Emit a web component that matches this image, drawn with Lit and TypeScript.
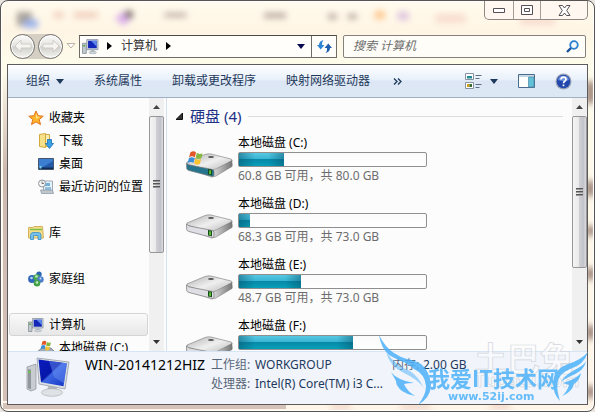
import { LitElement, html, css, svg } from "lit";
import { customElement } from "lit/decorators.js";

const pcIcon = (size: number) => html`<svg width=${size} height=${size} viewBox="0 0 16 16" aria-hidden="true">
  <path d="M.5 5h3.500v9.500h-3.500z" fill="#c4cbd0" stroke="#78848c" stroke-width=".7" />
  <path d="M1.300 6.500h1.500v1.500h-1.500z" fill="#3da12d" />
  <path d="M4.500 1.500h10.500v9.500h-10.500z" fill="#d6dce2" stroke="#8793a0" stroke-width=".8" />
  <path d="M5.700 2.700h8.200v7h-8.200z" fill="#1226b8" />
  <path d="M8.500 2.700h5.400v5.500z" fill="#5b86ea" />
  <path d="M8.500 11h3l.8 2.300h-4.600z" fill="#b5bdc5" />
  <ellipse cx="10" cy="13.700" rx="3.600" ry="1.100" fill="#d3d8dd" stroke="#98a1aa" stroke-width=".5" />
</svg>`;

const flag = svg`
  <path d="M4 3q4-3 7 0l-1.500 6q-3-2.500-7 0z" fill="#e2562a" />
  <path d="M12 3.500q3 2.500 7 .5l-1.500 6q-4 2-7-.5z" fill="#86b840" />
  <path d="M2.300 10q4-2.500 7 0l-1.500 6q-3-2.500-7 0z" fill="#3c8fd8" />
  <path d="M10.200 10.500q3 2.500 7 .5l-1.500 6q-4 2-7-.5z" fill="#f7c332" />`;

const driveIcon = (system: boolean) => html`<svg class="drive-icon" width="48" height="32" viewBox="0 0 48 32" aria-hidden="true">
  <defs>
    <linearGradient id="top" x1="0" y1="0" x2="1" y2="1"><stop offset="0" stop-color="#b0b0b0" /><stop offset=".5" stop-color="#efefef" /><stop offset="1" stop-color="#b5b5b5" /></linearGradient>
    <linearGradient id="side" x1="0" y1="0" x2="1" y2="0"><stop offset="0" stop-color="#d9d9d9" /><stop offset="1" stop-color="#777" /></linearGradient>
  </defs>
  <path d="M3 20l25 9 20-11v-3l-21 15z" fill="#000" opacity=".18" />
  <path d="M2 14L20 6.500q3-1 6-.5l20 5q1.500.5 1 2l-17 9.500q-2 .7-4 .3L3 16.500q-2-1-1-2.500z" fill="url(#top)" stroke="#8a8a8a" stroke-width=".7" />
  <path d="M47 12.500v6L31 28q-1.500.8-2.500.5v-7q1.500-.2 3-.8z" fill="url(#side)" stroke="#777" stroke-width=".5" />
  <path d="M1.500 15q1 1.500 3 2l23 4.500q1.500.3 1.500 2v3.500q0 2-2 1.500L4 22.500q-2-.5-2.300-2z" fill=${system ? "#23748c" : "#dedee4"} stroke="#777" stroke-width=".7" />
  <path d="M23 21l4 .8v5.500l-4-.9z" fill="#174b1c" />
  <path d="M24.300 22.300l1.500.3v3.600l-1.500-.3z" fill="#6fe03c" />
  <ellipse cx="26" cy="9" rx="3" ry="1" fill="#555" />
  ${system ? svg`<g transform="translate(2 2) scale(.82)">${flag}</g>` : ""}
</svg>`;

const icons: Record<string, unknown> = {
  star: html`<svg width="16" height="16" viewBox="0 0 16 16"><path d="M8 1l2.100 4.700 5.100.5-3.900 3.400 1.200 5-4.500-2.700-4.500 2.700 1.200-5L.8 6.200l5.100-.5z" fill="#ffb52b" stroke="#e2711d" /><path d="M8 3l1.200 3.600 2.800.4L8 9z" fill="#ffe48a" /></svg>`,
  download: html`<svg width="16" height="16" viewBox="0 0 16 16"><path d="M1.500 1.500l6-1v14l-6-1z" fill="#f7e08a" stroke="#d1a93c" /><path d="M7.500 1.500h4v12h-4z" fill="#fbeeb0" stroke="#d1a93c" /><path d="M9.500 6.500h4v4h2l-4 5-4-5h2z" fill="#38a0e6" stroke="#1a6cb5" stroke-width=".8" /></svg>`,
  desktop: html`<svg width="16" height="16" viewBox="0 0 16 16"><path d="M.5 2.500h15v11h-15z" fill="#235aa8" stroke="#44566e" /><path d="M1 3h14v2L5 11H1z" fill="#3c7fd0" /><path d="M1 11.500h14v1.500H1z" fill="#112c55" /><path d="M1.500 10h2v2.500h-2z" fill="#7fd0f2" /></svg>`,
  recent: html`<svg width="16" height="16" viewBox="0 0 16 16"><path d="M5.500 2h9v10h-9z" fill="#e6f1f8" stroke="#8a97a2" stroke-width=".8" /><path d="M7 4h5v3H7z" fill="#6db2dc" /><path d="M7 9h6M7 11h6" stroke="#3c8cc0" /><path d="M2.500 11h12l1 3.500H3.500z" fill="#bfc6cc" stroke="#8a97a2" stroke-width=".7" /><circle cx="4" cy="4.500" r="3.500" fill="#f5f5f5" stroke="#8d979e" /><path d="M4 2.500v2h2" stroke="#555" fill="none" stroke-width=".8" /></svg>`,
  library: html`<svg width="16" height="16" viewBox="0 0 16 16"><path d="M.5 13V2.500H5L6 1.500h8.500L15.500 13z" fill="#f4dc88" stroke="#c9a344" stroke-width=".8" /><path d="M2 4.500h12" stroke="#7fbf4c" stroke-width="1.500" /><path d="M2.500 14.500v-4q0-3 2.500-3h5.500q2.500 0 2.500 3v4h-3v-4h-4.500v4z" fill="#74c3ee" stroke="#388cc2" stroke-width=".8" /></svg>`,
  group: html`<svg width="16" height="16" viewBox="0 0 16 16"><circle cx="11" cy="3.200" r="2.700" fill="#2b66b5" /><circle cx="4" cy="8" r="3.900" fill="#2f66bb" /><circle cx="8.700" cy="6.500" r="3.300" fill="#48a850" /><circle cx="12.500" cy="8.500" r="3.200" fill="#4b7dca" /><circle cx="9" cy="12.300" r="3.300" fill="#45a04b" /><circle cx="3.500" cy="7" r="1.300" fill="#b5d3f5" /><circle cx="8.500" cy="5.500" r="1.200" fill="#c4f0c0" /><circle cx="9" cy="11.500" r="1.200" fill="#c4f0c0" /><circle cx="12.500" cy="7.500" r="1" fill="#d0e2fa" /></svg>`,
  pc: pcIcon(16),
  drive: html`<svg width="16" height="16" viewBox="0 0 16 16"><path d="M0 11l4-3h9l3 3v4H0z" fill="#a5adb2" stroke="#6d777c" stroke-width=".7" /><path d="M1 11.500h14v2.500H1z" fill="#28788c" /><g transform="translate(2 0) scale(.58)">${flag}</g></svg>`,
};

const sidebar = [
  { label: "收藏夹", icon: "star" },
  { label: "下载", icon: "download", child: true },
  { label: "桌面", icon: "desktop", child: true },
  { label: "最近访问的位置", icon: "recent", child: true },
  null,
  { label: "库", icon: "library" },
  null,
  { label: "家庭组", icon: "group" },
  null,
  { label: "计算机", icon: "pc", selected: true },
  { label: "本地磁盘 (C:)", icon: "drive", child: true },
];

const drives = [
  { name: "本地磁盘 (C:)", info: "60.8 GB 可用，共 80.0 GB", used: 24, system: true },
  { name: "本地磁盘 (D:)", info: "68.3 GB 可用，共 73.0 GB", used: 6, system: false },
  { name: "本地磁盘 (E:)", info: "48.7 GB 可用，共 73.0 GB", used: 33, system: false },
  { name: "本地磁盘 (F:)", info: "", used: 61, system: false },
];

@customElement("explorer-scrollbar")
class ExplorerScrollbar extends LitElement {
  static styles = css`
    :host { display: flex; flex-direction: column; width: 15px; flex: none; background: #f0f0f0; }
    .arrow { height: 18px; flex: none; border: 0; padding: 0; background: none; display: grid; place-items: center; }
    .track { flex: 1; min-height: 0; }
    .thumb { box-sizing: border-box; width: 15px; height: var(--thumb, 50%); border: 1px solid #979797; border-radius: 2px;
      background: linear-gradient(90deg, #f5f5f5, #e9e9eb 45%, #cfcfd4 50%, #c3c4cb 80%, #dcdce0); display: grid; place-items: center; }
    .grip { width: 7px; height: 8px; background: repeating-linear-gradient(#555 0 1px, #999 1px 2px, transparent 2px 3px); }
  `;
  render() {
    return html`
      <button class="arrow" aria-label="向上滚动"><svg width="7" height="4"><path d="M0 4L3.500 0 7 4z" fill="#444" /></svg></button>
      <div class="track"><div class="thumb"><div class="grip"></div></div></div>
      <button class="arrow" aria-label="向下滚动"><svg width="7" height="4"><path d="M0 0h7L3.500 4z" fill="#333" /></svg></button>`;
  }
}

@customElement("app-root")
class AppRoot extends LitElement {
  static styles = css`
    :host { display: block; height: 100vh; background: #e8e4df; font: 12px/18px "Noto Sans", "Noto Sans CJK SC", sans-serif; color: #000; }
    * { box-sizing: border-box; }
    button { border: 0; padding: 0; margin: 0; background: none; font: inherit; color: inherit; }
    a { color: inherit; text-decoration: none; }
    svg { display: block; flex: none; }
    .window { position: relative; height: 100%; display: flex; flex-direction: column; overflow: hidden; padding: 0 6px 6px;
      border: 1px solid #575350; border-radius: 8px; box-shadow: inset 0 0 0 1px #fff;
      background: linear-gradient(#fffbee, #fff5e4 30px, #fdfbea 60px, #fff5e8); }
    .glass { position: absolute; inset: 1px; width: calc(100% - 2px); height: calc(100% - 2px); }
    .title { position: relative; height: 19px; flex: none; display: flex; justify-content: flex-end; }
    .controls { display: flex; height: 19px; border: 1px solid #8e8985; border-top: 0; border-radius: 0 0 5px 5px; background: #fff7f0; }
    .controls button { width: 28px; display: grid; place-items: center; }
    .controls button + button { border-left: 1px solid #a39d99; width: 27px; }
    .controls button.close { width: 47px; }
    .nav { position: relative; height: 44px; flex: none; display: flex; align-items: center; padding: 10px 2px 2px 0; }
    .travel { display: flex; align-items: center; gap: 3px; background: #d6cfc4; border-radius: 14px; margin: 0 3px; }
    .travel button { width: 25px; height: 25px; border-radius: 50%; border: 1px solid #77736e; display: grid; place-items: center;
      background: linear-gradient(#fbfbfa, #e4e3df 48%, #cfcfcb 52%, #f4f4f0); box-shadow: inset 0 0 0 1px #fff; }
    .address { flex: 1; display: flex; align-items: center; height: 23px; margin-left: 3px; border: 1px solid #6f6b67; border-top-color: #4c4a48; background: #fffefb; }
    .address .crumb { margin: 0 9px; color: #333; }
    .address .refresh { width: 25px; height: 21px; border-left: 1px solid #6f6b67; display: grid; place-items: center; }
    .address .spacer { flex: 1; }
    .address .history { margin-right: 6px; padding: 6px 0; }
    .address > svg:first-child { margin: 0 8px 0 2px; }
    .search { display: flex; align-items: center; flex: 0 1 243px; min-width: 90px; height: 23px; margin-left: 6px; padding: 0 6px 0 9px; border: 1px solid #85807c; border-radius: 2px; background: #fffdf8; }
    .search input { flex: 1; min-width: 0; border: 0; outline: 0; padding: 0; background: none; font: inherit; font-style: italic; }
    .search input::placeholder { color: #6d6d6d; opacity: 1; }
    .body { position: relative; flex: 1; min-height: 0; display: flex; flex-direction: column; border: 1px solid #5c5a5a; margin: 0; background: #fcfcfc; }
    .toolbar { height: 33px; flex: none; display: flex; align-items: center; gap: 30px; padding: 0 15px 0 18px; color: #1e395b; white-space: nowrap;
      border-bottom: 1px solid #a0afc3; background: linear-gradient(#fdfeff, #e9f1fa 45%, #dce6f4 50%, #dde8f5); }
    .toolbar .menu { display: flex; align-items: center; gap: 6px; }
    .toolbar .more { margin-left: -7px; }
    .tools { flex: 1; display: flex; align-items: center; justify-content: flex-end; gap: 20px; }
    .toolbar .tools .menu { gap: 8px; }
    .panes { flex: 1; min-height: 0; display: flex; }
    .side { width: 141px; flex: none; overflow: hidden; padding: 8px 0 0 1px; }
    .row { height: 23px; display: flex; align-items: center; gap: 5px; padding-left: 18px; margin-right: 1px; white-space: nowrap; border: 1px solid transparent; border-radius: 3px; }
    .child { padding-left: 28px; }
    .selected { border-color: #d5d5d5; background: linear-gradient(#fafafa, #e7e7e7); }
    .splitter { width: 3px; flex: none; border-right: 1px solid #d3e0ef; margin-right: 8px; }
    .side-bar { --thumb: 63%; }
    .main-bar { --thumb: 70%; }
    .main { flex: 1; min-width: 0; overflow: hidden; padding-right: 9px; }
    .heading { height: 36px; display: flex; align-items: center; gap: 7px; color: #1e3287; margin: 0; padding-left: 1px; font-size: 15px; font-weight: 400; line-height: 20px; }
    .heading::after { content: ""; flex: 1; height: 1px; background: #dcdcdc; }
    .drive { height: 61px; display: grid; grid-template-columns: 48px minmax(60px, 189px); column-gap: 5px; padding-left: 10px; align-content: start; color: inherit; }
    .drive-icon { grid-row: 1 / 4; margin-top: 14px; }
    .name { height: 18px; white-space: nowrap; }
    .bar { height: 15px; border: 1px solid #8f8f8f; border-radius: 2px; background: linear-gradient(#fafafa, #fff); }
    .fill { height: 100%; background: linear-gradient(90deg, #07567080, transparent 16px calc(100% - 16px), #07567080), linear-gradient(#58c8e2, #38b5d4 45%, #0789a8 50%, #08a0b8); }
    .info { color: #6d6d6d; white-space: nowrap; }
    .details { height: 53px; flex: none; display: flex; padding: 4px 0 0 18px; background: #f1f5fb; border-top: 1px solid #d6e5f5; white-space: nowrap; }
    .facts { display: grid; grid-template-columns: 121px 39px 132px 26px auto; grid-auto-rows: 19px; column-gap: 5px; margin: 0 0 0 15px; color: #1e395b; align-content: start; }
    .facts dt { color: #5a6779; }
    .facts dd { margin: 0; }
    .facts .host { font-size: 14px; color: #000; grid-row: 1 / 3; }
    .mark { position: absolute; right: 0; bottom: 0; pointer-events: none; }
  `;

  private row(item: (typeof sidebar)[number]) {
    if (!item) return html`<div class="row"></div>`;
    return html`<a href="#" class="row ${item.child ? "child" : ""} ${item.selected ? "selected" : ""}">${icons[item.icon]}<span>${item.label}</span></a>`;
  }

  render() {
    return html`<div class="window">
      <svg class="glass" viewBox="0 0 593 410" preserveAspectRatio="none" aria-hidden="true">
        <defs><filter id="soft" x="-50%" y="-50%" width="200%" height="200%"><feGaussianBlur stdDeviation="3" /></filter>
        <linearGradient id="edge" x1="0" y1="0" x2="0" y2="1"><stop offset="0" stop-color="#cbb6ac" stop-opacity="0" /><stop offset=".3" stop-color="#cdb9b0" /><stop offset="1" stop-color="#d3c1b9" /></linearGradient></defs>
        <path d="M1 70h6v331H1z" fill="url(#edge)" />
        <path d="M1 403h284v6H1z" fill="#d5c3ba" />
        <g filter="url(#soft)">
          <path d="M15 10h15v14h-15z" fill="#a7a199" /><path d="M22 18h14v8h-14z" fill="#9ab2ed" />
          <path d="M52 10h10v6h-10zM72 10h24v6h-24z" fill="#f1cdbb" />
          <path d="M113 16l8-6 9 6-8 8z" fill="#dcb0ec" /><path d="M122 10l8-2 2 6-6 4z" fill="#776c64" />
          <path d="M163 11h22v4h-22zM263 11h22v5h-22zM327 12h9v5h-9zM347 12h9v5h-9z" fill="#b5a49b" />
          <path d="M374 9h10v8h-10z" fill="#ffc68c" /><path d="M397 10h11v8h-11z" fill="#ddc3df" />
          <path d="M435 12h30v9h-30zM520 15h35v8h-35z" fill="#f8ddcf" />
          <path d="M587 80h7v22h-7zM587 180h7v15h-7zM587 225h7v10h-7zM587 267h7v12h-7zM587 325h7v14h-7zM587 386h7v12h-7z" fill="#8d7065" />
          <path d="M330 404h20v5h-20zM400 404h30v5h-30zM490 404h20v5h-20z" fill="#eed1c2" />
        </g>
      </svg>
      <div class="title"><div class="controls">
        <button aria-label="最小化"><svg width="12" height="5"><path d="M.5.5h11v4H.5z" fill="#fff" stroke="#554f56" /></svg></button>
        <button aria-label="最大化"><svg width="12" height="10"><path d="M.5.5h11v9H.5zM3.500 3.500h5v3h-5z" fill="#fff" stroke="#554f56" /></svg></button>
        <button class="close" aria-label="关闭"><svg width="13" height="11" viewBox="0 0 13 11"><path d="M1 .5h3.500l2 2.500 2-2.500H12L8.700 5.500 12 10.500H8.500L6.500 8l-2 2.500H1l3.300-5z" fill="#fff" stroke="#554f56" /></svg></button>
      </div></div>
      <div class="nav">
        <div class="travel">
          <button aria-label="后退"><svg width="18" height="14" viewBox="0 0 18 14"><path d="M1 7l6-6v4h10v4H7v4z" fill="#f6f5f1" stroke="#cfccc5" /></svg></button>
          <button aria-label="前进"><svg width="18" height="14" viewBox="0 0 18 14"><path d="M17 7l-6-6v4H1v4h10v4z" fill="#f6f5f1" stroke="#cfccc5" /></svg></button>
        </div>
        <button aria-label="最近的页面"><svg width="10" height="6" viewBox="0 0 10 6"><path d="M1 .5h8l-4 4.500z" fill="#fff" stroke="#bdb2a4" /></svg></button>
        <div class="address">
          ${pcIcon(17)}
          <svg width="5" height="8"><path d="M0 0v8l5-4z" fill="#000" /></svg>
          <a href="#" class="crumb">计算机</a>
          <svg width="5" height="8"><path d="M0 0v8l5-4z" fill="#000" /></svg>
          <span class="spacer"></span>
          <button class="history" aria-label="以前的位置"><svg width="8" height="5"><path d="M0 0h8l-4 5z" fill="#0a0a50" /></svg></button>
          <button class="refresh" aria-label="刷新"><svg width="15" height="13" viewBox="0 0 15 13"><path d="M6.500 0q-2 2-1.500 5h2.500L3.700 9.500 0 5h2Q2 1 6.500 0z" fill="#2d86d3" /><path d="M8.500 13q2-2 1.500-5H7.500l3.800-4.500L15 8h-2q0 4-4.500 5z" fill="#1e5faf" /></svg></button>
        </div>
        <label class="search"><input type="text" placeholder="搜索 计算机" aria-label="搜索 计算机" />
          <svg width="13" height="13" viewBox="0 0 13 13"><path d="M1 12l4.500-4.500" stroke="#1c4f9c" stroke-width="2.400" /><circle cx="8" cy="5" r="3.800" fill="#f2f9ff" stroke="#2d7fcb" stroke-width="1.800" /></svg>
        </label>
      </div>
      <div class="body">
        <div class="toolbar">
          <button class="menu">组织<svg width="8" height="5"><path d="M0 0h8L4 5z" fill="#1e395b" /></svg></button>
          <button>系统属性</button><button>卸载或更改程序</button><button>映射网络驱动器</button>
          <button class="more" aria-label="更多"><svg width="9" height="7"><path d="M1 .5l3 3-3 3M5 .5l3 3-3 3" fill="none" stroke="#1e395b" stroke-width="1.300" /></svg></button>
          <div class="tools">
            <button class="menu" aria-label="更改视图"><svg width="17" height="16" viewBox="0 0 17 16"><path d="M.5.5h8v6h-8zM.5 9.500h8v6h-8z" fill="#fff" stroke="#8793a3" /><path d="M2 3h5v2.500H2z" fill="#268c94" /><path d="M2 11h2.500v3H2z" fill="#d39b1c" /><path d="M4.500 11h2.500v3H4.500z" fill="#386b35" /><path d="M10.500 2.500h6M10.500 5.500h4M10.500 11.500h6M10.500 14.500h4" stroke="#5c6e88" /></svg><svg width="8" height="5"><path d="M0 0h8L4 5z" fill="#1e395b" /></svg></button>
            <button aria-label="预览窗格"><svg width="17" height="14"><path d="M.5.500h16v13H.5z" fill="#fff" stroke="#4b6b8d" /><path d="M1 1h15v2H1z" fill="#c6d6e6" /><path d="M10.500 3h5.500v10h-5.500z" fill="#62c0d7" stroke="#4b8ba8" stroke-width=".7" /></svg></button>
            <button aria-label="帮助"><svg width="17" height="17" viewBox="0 0 17 17"><circle cx="8.500" cy="8.500" r="8" fill="#9aa4b6" /><circle cx="8.500" cy="8.500" r="6.800" fill="#2147ad" /><path d="M3 7a5.700 5.700 0 0 1 11 0q-5 2-11 0z" fill="#6b90de" /><path d="M6 6.500q.2-2.300 2.500-2.300T11 6.300q0 1.200-1.300 2-1.200.8-1.200 1.900M8.500 11.500v1.800" fill="none" stroke="#fff" stroke-width="1.700" /></svg></button>
          </div>
        </div>
        <div class="panes">
          <nav class="side">${sidebar.map((item) => this.row(item))}</nav>
          <explorer-scrollbar class="side-bar"></explorer-scrollbar>
          <div class="splitter"></div>
          <main class="main">
            <h2 class="heading"><svg width="7" height="7"><path d="M6.500 0v6.500H0z" fill="#333" stroke="#111" /></svg><span>硬盘 (4)</span></h2>
            ${drives.map((d) => html`<a href="#" class="drive">${driveIcon(d.system)}
              <span class="name">${d.name}</span>
              <div class="bar" role="meter" aria-valuenow=${d.used} aria-label=${d.name}><div class="fill" style="width:${d.used}%"></div></div>
              ${d.info ? html`<span class="info">${d.info}</span>` : ""}</a>`)}
          </main>
          <explorer-scrollbar class="main-bar"></explorer-scrollbar>
        </div>
        <div class="details">
          <svg width="44" height="42" viewBox="0 0 44 42" aria-hidden="true">
            <defs><linearGradient id="screen" x1="0" y1="0" x2="1" y2="1"><stop offset="0" stop-color="#0a1cc0" /><stop offset=".45" stop-color="#0616a8" /><stop offset=".5" stop-color="#3c66e2" /><stop offset="1" stop-color="#1230c4" /></linearGradient></defs>
            <path d="M1 11l9-3v25l-5 2-4-2z" fill="#c9cdd1" stroke="#8b9197" stroke-width=".7" /><path d="M2 13l3 .5v20l-3-1.500z" fill="#8f969c" /><circle cx="3.500" cy="16" r="1.200" fill="#64cb3b" />
            <path d="M22 30l8 1 3 5h-12z" fill="#b4b9be" /><ellipse cx="26" cy="36.500" rx="10.500" ry="3.800" fill="#dfe2e4" stroke="#a4a9ae" stroke-width=".6" />
            <path d="M11 2l32 4-4 27-26-5z" fill="#dde1e5" stroke="#979da5" stroke-width=".8" /><path d="M12.500 3.500l28.500 3.700-3.500 23-22.500-4z" fill="url(#screen)" /><path d="M23 5l18 2.300-3 20-10-6z" fill="#6c97f4" opacity=".45" />
          </svg>
          <dl class="facts"><dd class="host">WIN-20141212HIZ</dd><dt>工作组:</dt><dd>WORKGROUP</dd><dt>内存:</dt><dd>2.00 GB</dd><dt>处理器:</dt><dd>Intel(R) Core(TM) i3 C...</dd></dl>
        </div>
      </div>
      <svg class="mark" width="224" height="80" viewBox="370 332 224 80" aria-hidden="true">
        <g font-family="Noto Sans CJK SC" font-weight="700" fill="#fff" fill-opacity=".45" stroke="#d3d6dc" stroke-width=".7">
          <text x="474" y="372" font-size="33">土巴兔</text>
          <text x="474" y="388" font-size="18">Tubatu.com</text>
        </g>
        <g fill="#4db2fa" opacity=".85">
          <path d="M379 336Q385 348 394 354Q400 358 407 360Q416 362 421 365Q430 372 431 387Q430 399 418 406Q426 396 426 387Q425 375 414 370Q407 364 401 362Q394 359 389 356Q381 349 379 336z" />
          <path d="M386 353Q396 367 410 372Q418 377 424 389Q417 380 404 374Q390 368 386 353z" opacity=".6" />
          <path d="M391 373Q397 381 414 384Q408 384 404 385Q407 392 415 397Q408 396 402 392Q396 387 396 382z" />
          <path d="M588 353Q581 361 568 365Q554 370 553 384Q553 395 560 402Q557 392 557 385Q559 374 570 370Q584 366 588 353z" />
          <path d="M586 362C582 370 568 371 561 383C568 376 583 376 586 362z" />
          <path d="M581 374Q576 380 563 384L569 386Q567 393 562 397Q572 393 574 385Q580 381 581 374z" />
          <text x="428" y="388" font-family="Noto Sans CJK SC" font-size="22" font-weight="700">我爱IT技术网</text>
          <text x="448" y="401" font-family="DejaVu Sans" font-size="11" font-weight="700">www.52ij.com</text>
        </g>
      </svg>
    </div>`;
  }
}
